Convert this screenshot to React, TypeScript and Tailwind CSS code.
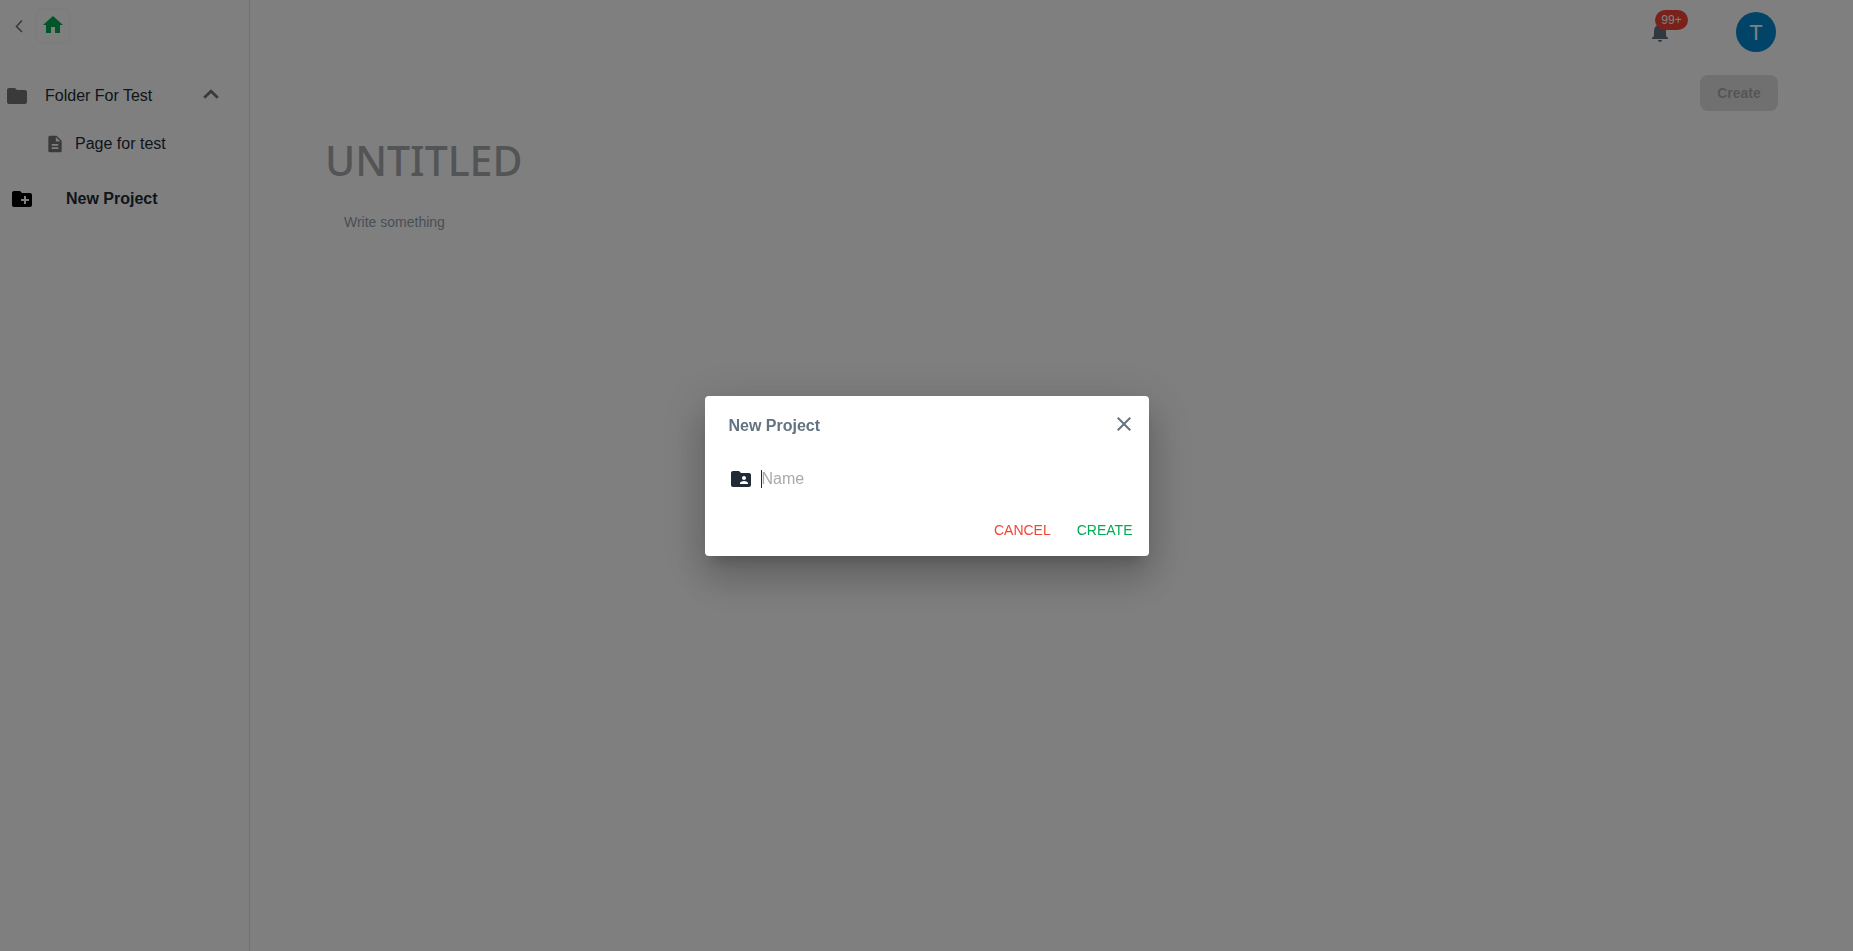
import {
  MdClose,
  MdCreateNewFolder,
  MdDescription,
  MdFolder,
  MdFolderShared,
  MdHome,
  MdNotifications,
} from "react-icons/md";

function Sidebar() {
  return (
    <aside className="flex w-[250px] shrink-0 flex-col border-r border-black/12">
      <div className="flex items-center gap-3 px-3 pt-[10px]">
        <button aria-label="Collapse sidebar" className="flex h-8 w-[13px] items-center justify-center text-[#757575]">
          <svg viewBox="0 0 8 14" className="h-[14px] w-2" fill="none" stroke="currentColor" strokeWidth="1.6">
            <path d="M7 1.500 1.500 7.500 7 13" />
          </svg>
        </button>
        <a
          href="#home"
          aria-label="Home"
          className="flex h-8 w-8 items-start justify-center rounded-md pt-[3px] text-[#00ab55] shadow-[0_0_4px_rgba(0,0,0,0.08)]"
        >
          <MdHome size={24} />
        </a>
      </div>

      <nav className="mt-8 flex flex-col text-base text-[#212b36]">
        <button className="flex h-11 items-center pr-[30px] pl-[5px] text-left">
          <MdFolder size={24} className="text-[#757575]" />
          <span className="ml-4 flex-1">Folder For Test</span>
          <svg viewBox="0 0 16 10" className="mb-1 h-[10px] w-4 text-[#757575]" fill="none" stroke="currentColor" strokeWidth="2.8">
            <path d="M1.200 8.700 8 2.200l6.800 6.500" />
          </svg>
        </button>
        <a href="#page" className="flex h-[52px] items-center pl-[45px]">
          <MdDescription size={20} className="text-[#757575]" />
          <span className="ml-[10px]">Page for test</span>
        </a>
        <button className="mt-[3px] flex h-[52px] items-center pl-[10px] text-left font-bold">
          <MdCreateNewFolder size={24} className="text-black" />
          <span className="ml-8">New Project</span>
        </button>
      </nav>
    </aside>
  );
}

function Editor() {
  return (
    <main className="flex flex-1 flex-col px-[75px]">
      <header className="flex h-16 items-center justify-end gap-16 pr-[2px]">
        <button aria-label="Notifications" className="relative text-[#637381]">
          <MdNotifications size={24} />
          <span className="absolute -top-[10px] left-[7px] flex h-5 min-w-[33px] items-center justify-center rounded-full bg-[#f44336] text-xs text-white">
            99+
          </span>
        </button>
        <button aria-label="Account" className="flex h-10 w-10 items-center justify-center rounded-full bg-[#0288d1] text-[22px] text-white">
          T
        </button>
      </header>
      <div className="mt-[11px] flex justify-end">
        <button disabled className="h-9 min-w-[78px] rounded-lg bg-black/12 px-4 text-sm font-bold text-black/26">
          Create
        </button>
      </div>
      <input
        aria-label="Title"
        placeholder="UNTITLED"
        className="mt-5 h-[60px] w-full bg-transparent font-['Noto_Sans',sans-serif] text-[41px] font-medium outline-none placeholder:text-[#a6a9ad]"
      />
      <textarea
        aria-label="Content"
        placeholder="Write something"
        className="mt-5 h-40 w-full resize-none bg-transparent px-[19px] text-sm leading-[22px] outline-none placeholder:text-[#919eab]"
      />
    </main>
  );
}

function NewProjectDialog() {
  return (
    <div className="fixed inset-0 flex items-center justify-center bg-black/50">
      <form
        role="dialog"
        aria-modal="true"
        aria-labelledby="dialog-title"
        className="w-full max-w-[444px] rounded bg-white shadow-[0_11px_15px_-7px_rgba(0,0,0,0.2),0_24px_38px_3px_rgba(0,0,0,0.14),0_9px_46px_8px_rgba(0,0,0,0.12)]"
      >
        <div className="flex items-start justify-between pt-4 pr-[13px] pl-6 text-[#637381]">
          <h2 id="dialog-title" className="pt-[2px] text-base font-bold">
            New Project
          </h2>
          <button type="button" aria-label="Close">
            <MdClose size={24} />
          </button>
        </div>
        <div className="mt-[26px] flex h-[30px] items-center gap-2 px-6">
          <MdFolderShared size={24} className="text-[#212b36]" />
          <input
            autoFocus
            aria-label="Project name"
            placeholder="Name"
            className="h-[18px] flex-1 border-l border-[#212b36] bg-transparent text-base text-[#212b36] caret-transparent outline-none placeholder:text-[#a6aaaf]"
          />
        </div>
        <div className="mt-[10px] flex justify-end gap-[10px] p-2 text-sm">
          <button type="button" className="h-9 min-w-16 px-2 text-[#f44336]">
            CANCEL
          </button>
          <button type="submit" className="h-9 min-w-16 px-2 text-[#00ab55]">
            CREATE
          </button>
        </div>
      </form>
    </div>
  );
}

export default function App() {
  return (
    <div className="flex min-h-screen bg-white font-['Liberation_Sans',sans-serif]">
      <Sidebar />
      <Editor />
      <NewProjectDialog />
    </div>
  );
}
